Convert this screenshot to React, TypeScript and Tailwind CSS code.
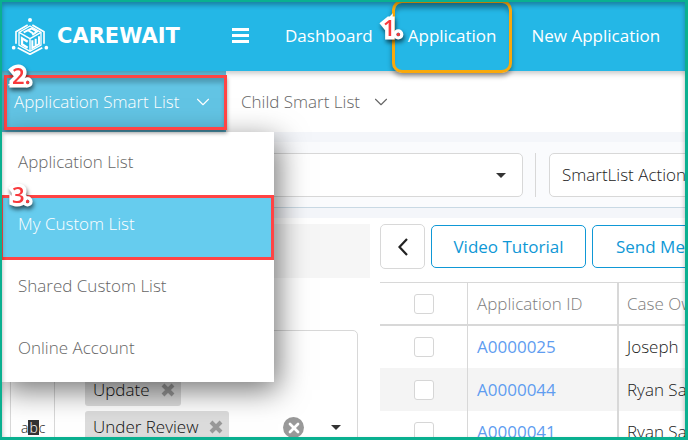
import { ChevronDown, X } from "lucide-react";

const menuItems = [
  { label: "Application List", active: false },
  { label: "My Custom List", active: true },
  { label: "Shared Custom List", active: false },
  { label: "Online Account", active: false },
];

const rows = [
  { id: "A0000025", owner: "Joseph" },
  { id: "A0000044", owner: "Ryan Sanders" },
  { id: "A0000041", owner: "Ryan Sanders" },
];

const statuses = ["Update", "Under Review"];

function Logo() {
  return (
    <svg viewBox="0 0 114 114" className="size-[38px]" fill="none" stroke="#fff" aria-hidden="true">
      <circle cx="57" cy="9" r="6" fill="#fff" stroke="none" />
      <circle cx="8" cy="92" r="5.500" fill="#fff" stroke="none" />
      <circle cx="106" cy="92" r="5.500" fill="#fff" stroke="none" />
      <path d="M15 80V44L50 24M64 24l35 20v36M20 92l37 20 37-20" strokeWidth="5" />
      <path d="M57 27L90 46V84L57 103L24 84V46Z" strokeWidth="4" />
      <path d="M24 46l33 19 33-19M57 65v38" strokeWidth="4" />
      <path d="M38 46l24-12 16 10-14 10M50 39l16 10" strokeWidth="6" />
      <path d="M50 74L33 64v18l17 10" strokeWidth="7" />
      <path d="M64 70v23l20-12V58M74 65v20" strokeWidth="6" />
    </svg>
  );
}

function StepBadge({ children, className }: { children: string; className: string }) {
  return (
    <span
      className={`absolute z-40 text-[22px] leading-6 font-semibold text-[#f8393c] [-webkit-text-stroke:7px_white] [paint-order:stroke_fill] [stroke-linejoin:round] drop-shadow-[1px_3px_2px_rgba(0,0,0,0.6)] ${className}`}
    >
      {children}
    </span>
  );
}

function Caret({ className = "" }: { className?: string }) {
  return (
    <svg viewBox="0 0 10 5" className={`h-[5px] w-[10px] ${className}`} aria-hidden="true">
      <path d="M0 0h10L5 5z" fill="#333" />
    </svg>
  );
}

function CheckBox({ label }: { label: string }) {
  return (
    <input
      type="checkbox"
      aria-label={label}
      className="mx-auto block size-5 appearance-none rounded-[3px] border border-[#d6d6d6] bg-white"
    />
  );
}

function TopBar() {
  return (
    <header className="relative z-10 flex h-[71px] items-center bg-[#24b7e6] pl-[11px] text-white shadow-[0_2px_6px_rgba(0,0,0,0.25)]">
      <a href="#" className="flex w-[221px] shrink-0 items-center gap-2">
        <Logo />
        <span className="font-['DejaVu_Sans'] text-[21px] leading-6 font-bold">CAREWAIT</span>
      </a>
      <button aria-label="Toggle menu" className="mr-9 shrink-0">
        <svg viewBox="0 0 17 15" className="h-[15px] w-[17px]" fill="#fff">
          <path d="M0 0h17v3H0zM0 6h17v3H0zM0 12h17v3H0z" />
        </svg>
      </button>
      <nav className="flex h-full shrink-0 items-center gap-[19px] font-normal whitespace-nowrap">
        <a href="#">Dashboard</a>
        <div className="relative -mb-[2px] flex h-[73px] items-center rounded-[10px] border-[3px] border-[#f9a90b] px-[13px] pb-[2px] shadow-[0_3px_5px_rgba(0,0,0,0.4),inset_0_8px_4px_-2px_rgba(0,0,0,0.25)]">
          <StepBadge className="top-3 -left-3">1.</StepBadge>
          <a href="#">Application</a>
        </div>
        <a href="#">New Application</a>
      </nav>
    </header>
  );
}

function SubNav() {
  return (
    <nav className="relative flex h-[61px] whitespace-nowrap bg-white text-[#666]">
      <div className="relative">
        <button className="flex h-full w-[226px] items-center justify-between bg-[#62c4e4] pr-3 pl-[14px] text-white">
          Application Smart List
          <ChevronDown className="size-[22px]" strokeWidth={1.2} />
        </button>
        <div className="pointer-events-none absolute top-1 -right-px bottom-[2px] left-1 z-30 border-[3px] border-[#ff4444] shadow-[0_3px_4px_rgba(0,0,0,0.4),inset_0_5px_4px_rgba(0,0,0,0.2)]" />
        <StepBadge className="-top-2 left-3">2.</StepBadge>
        {/* Open dropdown of the active tab */}
        <ul className="absolute top-full left-0 z-20 w-[274px] bg-white pb-[2px] shadow-[4px_8px_28px_rgba(0,0,0,0.55)]">
          {menuItems.map((item) => (
            <li key={item.label} className="relative">
              {item.active && (
                <>
                  <div className="absolute inset-x-0 top-px -bottom-1 border-[3px] border-[#ff4444] bg-[#66ccee]" />
                  <StepBadge className="-top-3 left-3">3.</StepBadge>
                </>
              )}
              <a
                href="#"
                className={`relative flex h-[62px] items-center pb-[2px] pl-[18px] ${item.active ? "text-white" : "text-[#666]"}`}
              >
                {item.label}
              </a>
            </li>
          ))}
        </ul>
      </div>
      <button className="flex items-center gap-[10px] px-[15px]">
        Child Smart List
        <ChevronDown className="size-[22px]" strokeWidth={1.2} />
      </button>
    </nav>
  );
}

function Toolbar() {
  return (
    <div className="border-y-[10px] border-[#f4f6fa] bg-[#fafbfd]">
      <div className="flex h-[66px] items-center gap-3 border-b border-[#c9d9e4] pl-[10px]">
        <div className="relative w-[513px] shrink-0">
          <select
            aria-label="Smart list"
            className="block h-11 w-full appearance-none rounded-[5px] border border-[#d8d8d8] bg-white px-3"
          />
          <Caret className="pointer-events-none absolute top-5 right-[17px]" />
        </div>
        <div className="mr-px h-11 w-px shrink-0 bg-[#d8d8d8]" />
        <div className="-mr-10 flex-1">
          <select
            aria-label="SmartList actions"
            className="block h-11 w-full appearance-none rounded-[5px] border border-[#d8d8d8] bg-white px-3 text-[#222]"
          >
            <option>SmartList Actions</option>
          </select>
        </div>
      </div>
    </div>
  );
}

function Filters() {
  return (
    <aside className="w-[370px] shrink-0">
      <div className="h-[54px] bg-[#f6f6f6]" />
      <div className="mt-[52px] mr-3 ml-[10px] flex h-60 rounded-[5px] border border-[#d8d8d8]">
        <div className="w-11 shrink-0 border-r border-[#d8d8d8] pt-[88px] pl-[10px] text-sm leading-[18px] text-[#222]">
          a<span className="inline-block h-[15px] bg-[#333] px-px leading-[15px] text-white">b</span>c
        </div>
        <div className="flex flex-1 flex-col items-start gap-[5px] pt-[43px] pl-[30px]">
          {statuses.map((status) => (
            <span
              key={status}
              className="flex h-8 items-center gap-[11px] rounded-[3px] bg-[#dcdcdc] pr-[6px] pl-2 whitespace-nowrap text-[#111]"
            >
              {status}
              <button aria-label={`Remove ${status}`}>
                <svg viewBox="0 0 14 14" className="size-[14px]" stroke="#999" strokeWidth="4">
                  <path d="M2 2l10 10M12 2L2 12" />
                </svg>
              </button>
            </span>
          ))}
        </div>
        <div className="flex items-start gap-[27px] pt-[86px] pr-4">
          <button aria-label="Clear all" className="grid size-[21px] place-items-center rounded-full bg-[#999]">
            <X className="size-4 text-white" strokeWidth={4} />
          </button>
          <Caret className="mt-2" />
        </div>
      </div>
    </aside>
  );
}

function Results() {
  return (
    <section className="min-w-0 flex-1 overflow-hidden whitespace-nowrap">
      <div className="flex h-[45px] items-center gap-[6px]">
        <button
          aria-label="Back"
          className="grid size-[45px] shrink-0 place-items-center rounded-[5px] border border-[#d8d8d8]"
        >
          <svg viewBox="0 0 10 18" className="h-[18px] w-[10px]" fill="none" stroke="#222" strokeWidth="2.200">
            <path d="M9 1L1.500 9L9 17" />
          </svg>
        </button>
        <button className="h-[43px] w-[155px] shrink-0 rounded-[5px] border border-[#0f98d6] font-normal text-[#0f98d6]">
          Video Tutorial
        </button>
        <button className="h-[43px] shrink-0 rounded-[5px] border border-[#0f98d6] px-[23px] font-normal text-[#0f98d6]">
          Send Message
        </button>
      </div>
      <table className="mt-[13px] w-full table-fixed border-separate border-spacing-0 border-t border-[#d8d8d8] text-left">
        <thead>
          <tr className="h-[43px] text-[#7d7d7d]">
            <th className="w-[88px] border-r border-b-2 border-[#d8d8d8] p-0">
              <CheckBox label="Select all" />
            </th>
            <th className="w-[151px] border-r-2 border-b-2 border-[#d8d8d8] px-[9px] py-0 font-light">Application ID</th>
            <th className="border-b-2 border-[#d8d8d8] px-2 py-0 font-light">Case Owner</th>
          </tr>
        </thead>
        <tbody>
          {rows.map((row) => (
            <tr key={row.id} className="h-[42px] text-[#222] even:h-[43px] even:bg-[#f4f4f4]">
              <td className="border-r border-[#d8d8d8] p-0">
                <CheckBox label={`Select ${row.id}`} />
              </td>
              <td className="border-r-2 border-[#d8d8d8] px-[9px] py-0">
                <a href="#" className="font-normal text-[#5f9df0]">
                  {row.id}
                </a>
              </td>
              <td className="px-2 py-0">{row.owner}</td>
            </tr>
          ))}
        </tbody>
      </table>
    </section>
  );
}

export default function App() {
  return (
    <div className="h-screen overflow-hidden bg-white font-['Open_Sans',sans-serif] text-[17px] leading-6 font-light">
      <TopBar />
      <SubNav />
      <main>
        <Toolbar />
        <div className="flex gap-[10px] pt-[6px]">
          <Filters />
          <Results />
        </div>
      </main>
      {/* Page frame */}
      <div className="pointer-events-none fixed inset-0 z-50 border-2 border-r-[3px] border-b-[3px] border-[#0ab090] shadow-[inset_0_3px_5px_rgba(0,0,0,0.3)]" />
    </div>
  );
}
